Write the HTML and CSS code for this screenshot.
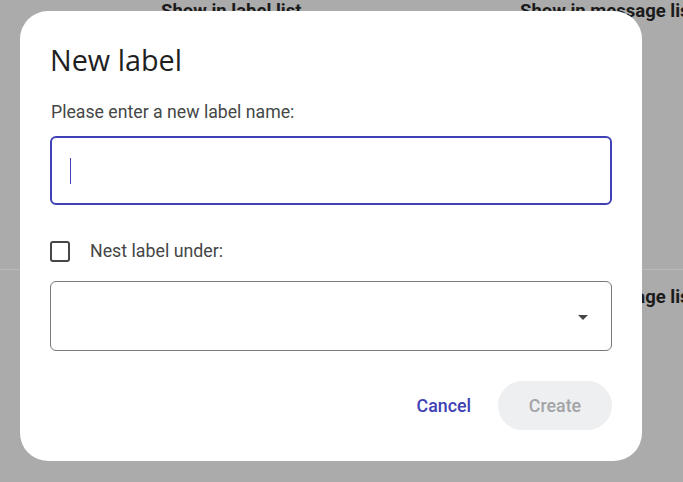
FILE: index.html
```html
<!DOCTYPE html>
<html lang="en">
<head>
<meta charset="utf-8">
<title>New label</title>
<link rel="stylesheet" href="styles.css">
</head>
<body>
<div class="page">
  <div class="cols cols-top">
    <span class="col-head">Show in label list</span>
    <span class="col-head">Show in message list</span>
  </div>
  <div class="divider"></div>
  <div class="cols cols-second">
    <span class="col-head"></span>
    <span class="col-head">Show in message list</span>
  </div>
</div>

<div class="dialog" role="dialog" aria-labelledby="dlg-title">
  <h1 class="title" id="dlg-title">New label</h1>
  <div class="prompt">Please enter a new label name:</div>
  <div class="field"><span class="caret"></span></div>
  <div class="nest-row">
    <span class="checkbox"></span>
    <span class="nest-text">Nest label under:</span>
  </div>
  <div class="select"><span class="arrow"></span></div>
  <div class="actions">
    <button class="btn btn-cancel" type="button">Cancel</button>
    <button class="btn btn-create" type="button" disabled>Create</button>
  </div>
</div>
</body>
</html>
```

FILE: styles.css
```css
html, body {
  margin: 0;
  padding: 0;
}

body {
  width: 683px;
  height: 482px;
  overflow: hidden;
  background: #ababab;
  font-family: Roboto, "Liberation Sans", sans-serif;
  position: relative;
}

.page {
  display: flex;
  flex-direction: column;
  overflow: hidden;
}

.cols {
  display: grid;
  grid-template-columns: 359px 1fr;
  padding-left: 161px;
  white-space: nowrap;
}

.cols-top {
  padding-top: 0;
}

.col-head {
  font: 700 18.5px/23px Roboto, "Liberation Sans", sans-serif;
  color: #1b1b1b;
  min-height: 23px;
}

.divider {
  margin-top: 246px;
  height: 1px;
  background: #b8b8b8;
}

.cols-second {
  padding-top: 16px;
}

.dialog {
  position: absolute;
  left: 20px;
  top: 11px;
  width: 622px;
  height: 450px;
  box-sizing: border-box;
  padding: 31px 30px 30px;
  background: #ffffff;
  border-radius: 28px;
  display: flex;
  flex-direction: column;
}

.title {
  margin: 0;
  font: 400 28.8px/36px "Open Sans", sans-serif;
  color: #1f1f1f;
}

.prompt {
  margin-top: 22px;
  font: 400 17.7px/24px Roboto, sans-serif;
  color: #444746;
  padding-left: 1px;
}

.field {
  margin-top: 12px;
  height: 69px;
  box-sizing: border-box;
  border: 2.5px solid #3f42b5;
  border-radius: 6px;
  display: flex;
  align-items: center;
  padding-left: 18px;
}

.caret {
  width: 1.2px;
  height: 26px;
  background: #3f42b5;
}

.nest-row {
  margin-top: 34px;
  height: 24px;
  display: flex;
  align-items: center;
  gap: 20px;
}

.checkbox {
  width: 20px;
  height: 21px;
  box-sizing: border-box;
  border: 2px solid #444746;
  border-radius: 3px;
}

.nest-text {
  font: 400 17.8px/24px Roboto, sans-serif;
  color: #444746;
}

.select {
  margin-top: 18px;
  height: 70px;
  box-sizing: border-box;
  border: 1px solid #7a7a7a;
  border-radius: 6px;
  display: flex;
  align-items: center;
  justify-content: flex-end;
  padding-right: 23px;
}

.arrow {
  width: 0;
  height: 0;
  border-left: 5.5px solid transparent;
  border-right: 5.5px solid transparent;
  border-top: 5.5px solid #444746;
  margin-top: 2px;
}

.actions {
  margin-top: 30px;
  display: flex;
  justify-content: flex-end;
  align-items: center;
  gap: 6px;
}

.btn {
  height: 49px;
  border: none;
  border-radius: 25px;
  font: 500 17.8px/49px Roboto, sans-serif;
  padding: 0 21px;
  background: transparent;
  cursor: pointer;
}

.btn-cancel {
  color: #3f42b5;
}

.btn-create {
  width: 114px;
  padding: 0;
  background: #eeeff1;
  color: #a3a4a8;
}
```
